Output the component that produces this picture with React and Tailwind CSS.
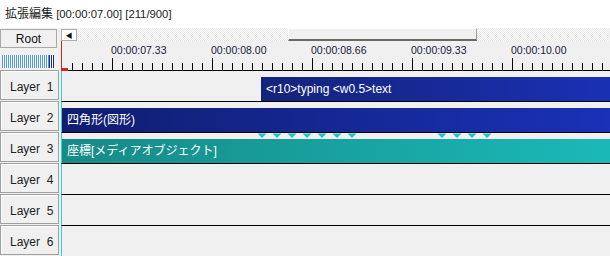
// AviUtl-style extended edit timeline
// title caption, root/meter column, ruler, six layer rows

const FONT = { fontFamily: '"Liberation Sans", "Noto Sans CJK JP", sans-serif' };

const layers = [1, 2, 3, 4, 5, 6];
const majors = [
  { x: 50, label: "00:00:07.33" },
  { x: 150, label: "00:00:08.00" },
  { x: 250, label: "00:00:08.66" },
  { x: 350, label: "00:00:09.33" },
  { x: 450, label: "00:00:10.00" },
];
const keys = [200, 215, 230, 245, 260, 275, 290, 380, 395, 410, 425];

const Ruler = () => {
  const ticks = [];
  for (let x = 10; x < 549; x += 10) {
    const major = (x - 50) % 100 === 0;
    ticks.push(<line key={x} x1={x + 0.5} x2={x + 0.5} y1={major ? 17 : 22} y2={29} stroke="#000" />);
  }
  return (
    <div className="relative h-[30px] bg-[#f0f0f0] border-l border-[#e0201a]">
      {majors.map((m) => (
        <span key={m.x} className="absolute top-[2px] text-[10.5px] leading-[14px] text-[#1a1a3a]" style={{ left: m.x - 1 }}>
          {m.label}
        </span>
      ))}
      <svg className="absolute left-0 top-0" width="549" height="30">
        {ticks}
        <line x1="0" x2="549" y1="29.5" y2="29.5" stroke="#000" />
        <rect x="0" y="27" width="6" height="3" fill="#e0201a" />
      </svg>
    </div>
  );
};

const Bar = ({ className, children }) => (
  <div className={`h-[24px] flex items-center pl-[5px] text-[12px] text-white whitespace-pre ${className}`}>{children}</div>
);

const App = () => {
  return (
    <div className="w-[610px] h-[256px] overflow-hidden bg-[#f0f0f0] text-[#111]" style={FONT}>
      {/* caption */}
      <div className="h-[28px] bg-white flex items-center pl-[5px] text-[#222] whitespace-pre">
        <span className="text-[12px]">拡張編集</span>
        <span className="text-[11.3px]"> [00:00:07.00] [211/900]</span>
      </div>

      <div className="flex">
        {/* left column */}
        <div className="w-[61px] shrink-0">
          <div className="h-[19px] w-[57px] mt-[1px] border border-[#a9a9a9] bg-[#f0f0f0] flex items-center justify-center text-[12px]">
            Root
          </div>
          <div className="h-[22px] flex items-center pl-[2px] pt-[5px]">
            <div className="h-[13px] w-[47px] bg-[repeating-linear-gradient(90deg,#4f97f2_0_1px,#ffffff_1px_2px)]" />
            <div className="h-[13px] w-[5px] bg-[repeating-linear-gradient(90deg,#1b2f7a_0_1px,#ffffff_1px_2px)]" />
          </div>
          {layers.map((n) => (
            <div key={n} className="h-[31px] pb-[1px]">
              <div className="h-[30px] w-[59px] border border-[#a0a0a0] shadow-[inset_1px_1px_0_#fff] bg-[#f0f0f0] flex items-center pl-[9px] pt-[3px] text-[12px] whitespace-pre text-[#222]">
                {`Layer  ${n}`}
              </div>
            </div>
          ))}
        </div>

        {/* timeline */}
        <div className="flex-1 min-w-0">
          <div className="h-[13px] flex">
            <div className="w-[16px] h-[12px] mt-[1px] border border-[#adadad] bg-white flex items-center justify-center text-[7px] leading-none">◀</div>
            <div className="w-[211px] bg-[repeating-conic-gradient(#e6e6e6_0%_25%,#ffffff_0%_50%)] bg-[length:2px_2px]" />
            <div className="w-[189px] h-[13px] bg-[#f0f0f0] border-t border-l border-white border-b-2 border-b-[#6a6a6a] border-r border-r-[#a0a0a0]" />
            <div className="flex-1 bg-[repeating-conic-gradient(#e6e6e6_0%_25%,#ffffff_0%_50%)] bg-[length:2px_2px]" />
          </div>
          <Ruler />
          {layers.map((n) => (
            <div key={n} className="relative h-[31px] pt-[6px] border-b border-black border-l border-l-[#22d8e8]">
              {n === 1 && (
                <div className="flex">
                  <div className="w-[199px]" />
                  <Bar className="flex-1 bg-[linear-gradient(90deg,#14237a,#1a30b4)]">{"<r10>typing <w0.5>text"}</Bar>
                </div>
              )}
              {n === 2 && <Bar className="bg-[linear-gradient(90deg,#0f1e70,#1a31b8)]">四角形(図形)</Bar>}
              {n === 3 && (
                <>
                  <svg className="absolute left-0 top-0" width="548" height="6">
                    {keys.map((x) => (
                      <polygon key={x} points={`${x - 4.5},0.5 ${x + 4.5},0.5 ${x},5`} fill="#1ec4c8" />
                    ))}
                  </svg>
                  <Bar className="bg-[linear-gradient(90deg,#168a86,#1ab9b8)]">座標[メディアオブジェクト]</Bar>
                </>
              )}
            </div>
          ))}
        </div>
      </div>
    </div>
  );
};

export default App;
